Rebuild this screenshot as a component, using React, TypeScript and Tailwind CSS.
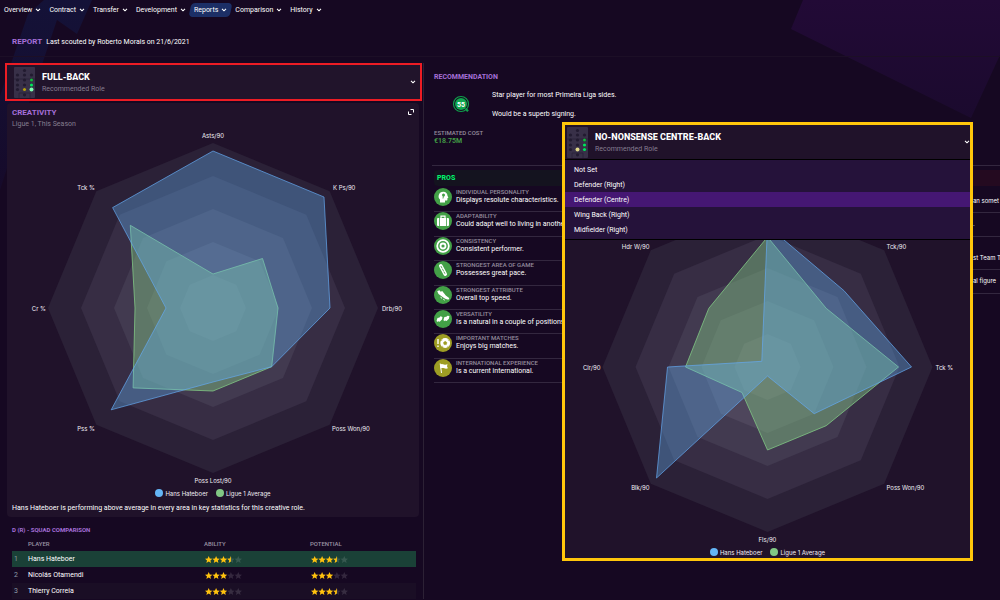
import { type ReactNode } from "react";

type Point = [number, number];
type AxisLabel = { text: string; x: number; y: number; anchor: "start" | "middle" | "end" };
type Chart = { labels: AxisLabel[]; player: number[]; average: number[] };

const NAV = ["Overview", "Contract", "Transfer", "Development", "Reports", "Comparison", "History"];

const RINGS = [
  { r: 165, fill: "#2b2137" },
  { r: 132, fill: "#372d44" },
  { r: 99, fill: "#423a50" },
  { r: 66, fill: "#4e465c" },
  { r: 33, fill: "#595167" },
];

// Values run clockwise from the top axis, in chart units (0 - 165)
const CREATIVITY: Chart = {
  labels: [
    { text: "Asts/90", x: 0, y: -172, anchor: "middle" },
    { text: "K Ps/90", x: 120, y: -120, anchor: "start" },
    { text: "Drb/90", x: 169, y: 1, anchor: "start" },
    { text: "Poss Won/90", x: 119, y: 121, anchor: "start" },
    { text: "Poss Lost/90", x: 0, y: 173, anchor: "middle" },
    { text: "Pss %", x: -118, y: 121, anchor: "end" },
    { text: "Cr %", x: -167, y: 1, anchor: "end" },
    { text: "Tck %", x: -118, y: -120, anchor: "end" },
  ],
  player: [157, 157, 117, 83, 74, 144, 47, 142],
  average: [34, 70, 65, 83, 83, 113, 78, 117],
};

const DEFENDING: Chart = {
  labels: [
    { text: "Tck/90", x: 119, y: -120, anchor: "start" },
    { text: "Tck %", x: 168, y: 1, anchor: "start" },
    { text: "Poss Won/90", x: 119, y: 121, anchor: "start" },
    { text: "Fls/90", x: 0, y: 173, anchor: "middle" },
    { text: "Blk/90", x: -118, y: 121, anchor: "end" },
    { text: "Clr/90", x: -167, y: 1, anchor: "end" },
    { text: "Hdr W/90", x: -118, y: -120, anchor: "end" },
  ],
  player: [141, 108, 144, 66, 9, 157, 100, 8],
  average: [130, 83, 131, 83, 83, 36, 82, 83],
};

const PLAYERS = [
  { rank: 1, name: "Hans Hateboer", ability: 3.5, potential: 3.5 },
  { rank: 2, name: "Nicolás Otamendi", ability: 3, potential: 3 },
  { rank: 3, name: "Thierry Correia", ability: 3, potential: 3.5 },
];

const POSITIONS = ["Not Set", "Defender (Right)", "Defender (Centre)", "Wing Back (Right)", "Midfielder (Right)"];

const PROS: { title: string; text: string; gold?: boolean; icon: ReactNode }[] = [
  {
    title: "INDIVIDUAL PERSONALITY",
    text: "Displays resolute characteristics.",
    icon: (
      <>
        <path d="M6 14.5v-3C4.6 10.200 4.300 8.500 4.800 6.900 5.500 4.800 7.300 3.600 9.400 3.700c2.500.1 4.100 1.700 4.100 4l.9 2.100-1 .4v1.500c0 .6-.4.9-1 .9H11v1.900z" fill="#fff" />
        <circle cx="9.500" cy="7" r="1.500" fill="#43a047" />
        <path d="M9.500 7.500L9 10.500" stroke="#43a047" strokeWidth=".9" />
      </>
    ),
  },
  {
    title: "ADAPTABILITY",
    text: "Could adapt well to living in another",
    icon: (
      <>
        <path d="M7 6V4.200h4V6" fill="none" stroke="#fff" strokeWidth="1.200" />
        <rect x="3" y="6" width="12" height="8" rx="1" fill="#fff" />
        <path d="M5.500 6v8M12.500 6v8" stroke="#43a047" strokeWidth=".8" />
      </>
    ),
  },
  {
    title: "CONSISTENCY",
    text: "Consistent performer.",
    icon: (
      <g fill="none" stroke="#fff">
        <circle cx="9" cy="9" r="5.800" strokeWidth="1.800" />
        <circle cx="9" cy="9" r="2.500" strokeWidth="1.800" />
      </g>
    ),
  },
  {
    title: "STRONGEST AREA OF GAME",
    text: "Possesses great pace.",
    icon: (
      <g transform="rotate(-28 9 9)">
        <rect x="7.200" y="2.500" width="3.600" height="13" rx="1.800" fill="#fff" />
        <path d="M9 4.500v9" stroke="#43a047" strokeWidth=".8" strokeDasharray="2.500 .6" />
      </g>
    ),
  },
  {
    title: "STRONGEST ATTRIBUTE",
    text: "Overall top speed.",
    icon: (
      <>
        <path d="M3.200 5.200l2.200-.9 1.300 1.400 1.500-.7 3.600 4.600 3 2.200c.7.6.5 1.600-.4 1.700-1.500.2-3.200-.3-4.400-1.400L4.500 7.900z" fill="#fff" />
        <path d="M6.500 11.200l1.600 1.200M9.300 13.300l1.400.8" stroke="#fff" strokeWidth="1" />
      </>
    ),
  },
  {
    title: "VERSATILITY",
    text: "Is a natural in a couple of positions.",
    icon: (
      <>
        <path d="M2.600 10.500l.9-2.600 2-.4 1-1.200 2 .6-.5 2.700-2.300 2.200-1.600-.5-1 .7z" fill="#fff" />
        <path d="M9.500 9.700l.9-2.600 2-.4 1-1 2 .4-.5 2.700-2.300 2.200-1.600-.5-1 .7z" fill="#fff" />
      </>
    ),
  },
  {
    title: "IMPORTANT MATCHES",
    text: "Enjoys big matches.",
    gold: true,
    icon: (
      <>
        <path d="M4 5v5M4 11.500v1.500" stroke="#fff" strokeWidth="1.400" />
        <circle cx="11.200" cy="9" r="4.900" fill="#fff" />
        <path d="M11.200 7.300l1.700 1.300-.6 2h-2.200l-.6-2zM7.300 7l1-1.400M15.100 7l-1-1.400M8 12.200l1.200.3M14.500 12.200l-1.200.3" fill="#9e9d24" stroke="#9e9d24" strokeWidth=".6" />
      </>
    ),
  },
  {
    title: "INTERNATIONAL EXPERIENCE",
    text: "Is a current international.",
    gold: true,
    icon: (
      <>
        <path d="M6.200 4.500l1.300 9.500" stroke="#fff" strokeWidth="1" />
        <path d="M6 5.500c1.500-1 2.800-.6 4-.1 1 .4 2 .4 3.500-.2l-.5 2.100.9 2c-1.500.6-2.600.4-3.600 0-1.300-.5-2.400-.6-3.700.1z" fill="#fff" />
      </>
    ),
  },
];

function axisPoint(index: number, value: number): Point {
  const angle = (index * Math.PI) / 4;
  return [Math.sin(angle) * value, -Math.cos(angle) * value];
}

function polygon(values: number[]) {
  return values.map((v, i) => axisPoint(i, v).map((n) => n.toFixed(1)).join(",")).join(" ");
}

function Chevron() {
  return (
    <svg viewBox="0 0 6 4" className="h-1 w-1.5 shrink-0" aria-hidden="true">
      <path d="M1 .8l2 2 2-2" fill="none" stroke="currentColor" strokeWidth="1.100" />
    </svg>
  );
}

function Pitch({ centre }: { centre?: boolean }) {
  const rows = [8, 13, 18, 22.5];
  return (
    <svg viewBox="0 0 21 31" className="h-[31px] w-[21px] shrink-0" aria-hidden="true">
      <rect width="21" height="31" rx="1" fill="#383048" />
      <path d="M0 12h21M5 31v-5h11v5" fill="none" stroke="#2a2238" strokeWidth=".8" />
      <circle cx="10.500" cy="3.500" r="1.600" fill="#221b30" />
      <circle cx="10.500" cy="27.800" r="1.600" fill="#221b30" />
      {rows.map((y) =>
        [3.5, 10.5, 17.5].map((x) => <circle key={`${x}-${y}`} cx={x} cy={y} r="1.600" fill="#221b30" />),
      )}
      <circle cx="17.500" cy="13" r="1.500" fill="#12b83a" />
      <circle cx="17.500" cy="18" r="1.600" fill="#00e65c" />
      <circle cx="17.500" cy="22.500" r={centre ? 1.6 : 2} fill={centre ? "#00e65c" : "#7dffb0"} />
      <circle cx="10.500" cy="22.500" r={centre ? 2 : 1.6} fill={centre ? "#e0d98a" : "#b5a010"} />
    </svg>
  );
}

function RoleHeader({ role, centre, open }: { role: string; centre?: boolean; open?: boolean }) {
  return (
    <button type="button" aria-expanded={!!open} className="flex h-[34px] w-full items-center gap-[7px] pl-0.5 text-left text-white">
      <Pitch centre={centre} />
      <span className="flex-1 pt-0.5">
        <span className="block text-[9px] leading-3 font-extrabold">{role}</span>
        <span className="block text-[7px] leading-3 text-[#857d90]">Recommended Role</span>
      </span>
      <Chevron />
    </button>
  );
}

function Radar({ chart, name }: { chart: Chart; name: string }) {
  return (
    <svg viewBox="-202 -180 404 360" role="img" aria-label={name} className="block h-[360px] w-full font-[Inter,sans-serif]">
      {RINGS.map((ring) => (
        <polygon key={ring.r} points={polygon(Array(8).fill(ring.r))} fill={ring.fill} />
      ))}
      <polygon points={polygon(chart.average)} fill="#81c784" fillOpacity=".44" stroke="#81c784" strokeOpacity=".8" />
      <polygon points={polygon(chart.player)} fill="#64b5f6" fillOpacity=".35" stroke="#64a8f0" strokeOpacity=".7" />
      {chart.labels.map((label) => (
        <text key={label.text} x={label.x} y={label.y} textAnchor={label.anchor} dominantBaseline="middle" fontSize="6" fill="#f2eff5">
          {label.text}
        </text>
      ))}
    </svg>
  );
}

function Legend() {
  return (
    <ul className="flex h-[10px] items-center justify-center gap-2 font-[Inter,sans-serif] text-[6px] text-[#f2eff5]">
      <li className="flex items-center gap-0.5">
        <span className="size-2 rounded-full bg-[#64b5f6]" />
        Hans Hateboer
      </li>
      <li className="flex items-center gap-0.5">
        <span className="size-2 rounded-full bg-[#81c784]" />
        Ligue 1 Average
      </li>
    </ul>
  );
}

function Stars({ value }: { value: number }) {
  const star = "M3.700.1l1.100 2.400 2.600.2-2 1.700.6 2.600-2.300-1.400-2.300 1.400.6-2.600L0 2.700l2.600-.2z";
  const half = "M3.700.1v5.500l-2.300 1.400.6-2.600L0 2.700l2.600-.2z";
  return (
    <svg viewBox="0 0 37 7" role="img" aria-label={`${value} stars`} className="ml-px block h-[7px] w-[37px]">
      {[0, 1, 2, 3, 4].map((i) => (
        <g key={i} transform={`translate(${i * 7.4} 0)`}>
          <path d={star} fill={value >= i + 1 ? "#ffc20e" : "#fff"} fillOpacity={value >= i + 1 ? 1 : 0.13} />
          {value === i + 0.5 && <path d={half} fill="#ffc20e" />}
        </g>
      ))}
    </svg>
  );
}

function SquadTable() {
  return (
    <section className="mt-2 px-[7px]">
      <h2 className="text-[6px] leading-[10px] font-bold text-[#a56fd8]">D (R) - SQUAD COMPARISON</h2>
      <table className="w-full table-fixed text-left text-[7px] text-white">
        <colgroup>
          <col className="w-4" />
          <col className="w-44" />
          <col className="w-[106px]" />
          <col />
        </colgroup>
        <thead>
          <tr className="h-4 text-[6px] text-[#9a92a3]">
            <th aria-label="Rank" />
            <th className="font-medium">PLAYER</th>
            <th className="font-medium">ABILITY</th>
            <th className="font-medium">POTENTIAL</th>
          </tr>
        </thead>
        <tbody>
          {PLAYERS.map((p) => (
            <tr key={p.rank} className="h-4 first:bg-[#1a4137] odd:not-first:bg-[#1a0e25]">
              <td className="pl-0.5 text-[#8f9aa8]">{p.rank}</td>
              <td>{p.name}</td>
              <td><Stars value={p.ability} /></td>
              <td><Stars value={p.potential} /></td>
            </tr>
          ))}
        </tbody>
      </table>
    </section>
  );
}

function Backdrop() {
  return (
    <svg viewBox="0 0 1000 600" preserveAspectRatio="none" className="absolute inset-0 size-full" aria-hidden="true">
      <defs>
        <linearGradient id="violet" x1="0" y1="0" x2="0" y2="1">
          <stop offset="0" stopColor="#220a36" />
          <stop offset="1" stopColor="#1b0a2e" />
        </linearGradient>
        <linearGradient id="blue" x1="0" y1="0" x2="0" y2="1">
          <stop offset="0" stopColor="#141238" />
          <stop offset="1" stopColor="#160a2a" />
        </linearGradient>
      </defs>
      <path d="M803 0L791 29L971 118L1000 55V0z" fill="url(#violet)" />
      <path d="M28 14L44 0H92L77 34L57 20L8 165L0 190V96z" fill="url(#blue)" />
    </svg>
  );
}

function RolePopup() {
  return (
    <div className="absolute top-[122px] right-[27px] w-[411px] border-3 border-[#ffc60b] bg-[#20122a] pb-px">
      <RoleHeader role="NO-NONSENSE CENTRE-BACK" centre open />
      <div className="relative pt-7">
        <ul className="absolute inset-x-0 top-0 border-y border-black bg-[#25123a] py-0.5">
          {POSITIONS.map((position) => (
            <li key={position}>
              <button
                type="button"
                aria-current={position === "Defender (Centre)"}
                className="block h-[15px] w-full pt-px pl-[9px] text-left text-[7px] leading-[15px] text-white aria-[current=true]:bg-[#451773]"
              >
                {position}
              </button>
            </li>
          ))}
        </ul>
        <Radar chart={DEFENDING} name="Defending statistics" />
        <Legend />
      </div>
    </div>
  );
}

function Pros() {
  return (
    <section className="pl-0.5 whitespace-nowrap">
      <h2 className="h-4 rounded-sm bg-[#14131f] pl-[3px] text-[7px] leading-[17px] font-extrabold text-[#00f26a]">PROS</h2>
      <ul className="mt-0.5 grid h-[195px] grid-rows-8">
        {PROS.map((pro) => (
          <li key={pro.title} className="flex items-start gap-1 border-b border-[#33273f]">
            <svg viewBox="0 0 18 18" className="size-[18px] shrink-0" aria-hidden="true">
              <circle cx="9" cy="9" r="9" fill={pro.gold ? "#9e9d24" : "#43a047"} />
              {pro.icon}
            </svg>
            <div>
              <h3 className="text-[6px] leading-2 font-medium text-[#958d9e]">{pro.title}</h3>
              <p className="text-[7px] leading-[9px] text-white">{pro.text}</p>
            </div>
          </li>
        ))}
      </ul>
    </section>
  );
}

function Cons() {
  return (
    <section aria-label="Cons" className="font-[Inter,sans-serif] text-[6px] whitespace-nowrap text-white">
      <div className="h-4 bg-[#240a20]" />
      <ul className="*:border-b *:border-[#33273f]">
        <li className="h-[27px] pt-2.5">an somet</li>
        <li className="h-6 pt-1.5">.</li>
        <li className="h-[33px] pt-4">st Team T</li>
        <li className="h-6 pt-1.5">al figure</li>
      </ul>
    </section>
  );
}

export default function App() {
  return (
    <div className="relative h-screen overflow-hidden bg-[#160822] font-[Roboto,sans-serif] text-white">
      <Backdrop />
      <div className="relative">
        <nav className="flex h-5 items-center gap-2 pl-1 text-[7px]">
          {NAV.map((item) => (
            <button
              key={item}
              type="button"
              aria-current={item === "Reports" ? "page" : undefined}
              className="relative flex h-3.5 items-center gap-[3px] before:absolute before:inset-y-0 before:-inset-x-1 before:-skew-x-12 before:rounded-sm aria-[current=page]:before:bg-[#1c2f66]"
            >
              <span className="relative">{item}</span>
              <span className="relative"><Chevron /></span>
            </button>
          ))}
        </nav>

        <header className="flex h-[37px] items-center gap-1 border-b border-[#1c0f26] pt-2 pl-3">
          <h1 className="text-[8px] font-bold text-[#a56fd8]">REPORT</h1>
          <p className="text-[7px]">Last scouted by Roberto Morais on 21/6/2021</p>
        </header>

        <main className="flex pt-[6px]">
          <div className="w-[42.4%] shrink-0 border-r border-[#2c2135] pl-[5px]">
            <div className="mr-px border-2 border-[#ed1c24] bg-[#21142b] pr-1 pl-[5px]">
              <RoleHeader role="FULL-BACK" />
            </div>
            <section className="mt-0.5 mr-1 ml-0.5 rounded-sm bg-[#20122a]">
              <div className="flex h-[25px] items-start justify-between px-[5px] pt-1">
                <div>
                  <h2 className="text-[8px] leading-[11px] font-bold text-[#a56fd8]">CREATIVITY</h2>
                  <p className="text-[7px] leading-3 text-[#857d90]">Ligue 1, This Season</p>
                </div>
                <button type="button" aria-label="Expand">
                  <svg viewBox="0 0 6 6" className="mt-0.5 size-1.5" aria-hidden="true">
                    <path d="M2.500.5h3v3M.5 2.500v3h3" fill="none" stroke="#fff" strokeWidth="1" />
                  </svg>
                </button>
              </div>
              <Radar chart={CREATIVITY} name="Creativity statistics" />
              <Legend />
              <p className="px-[5px] pt-1 pb-[3px] text-[7px] leading-3">
                Hans Hateboer is performing above average in every area in key statistics for this creative role.
              </p>
            </section>
            <SquadTable />
          </div>

          <div className="min-w-0 flex-1 pl-2">
            <section className="pt-[9px] pl-0.5">
              <h2 className="text-[7px] leading-[10px] font-bold text-[#a56fd8]">RECOMMENDATION</h2>
              <div className="flex h-11 items-center gap-[22px] pl-[18px]">
                <svg viewBox="0 0 18 18" role="img" aria-label="Score 55" className="size-[18px]">
                  <circle cx="9" cy="9" r="7.500" fill="none" stroke="#0fa04b" strokeWidth="1.200" />
                  <path d="M13.500 13.500l2.500 2.800" stroke="#0fa04b" strokeWidth="2.200" />
                  <circle cx="9" cy="9" r="6" fill="#10a84f" />
                  <text x="9" y="11.500" textAnchor="middle" fontSize="7" fontWeight="700" fill="#fff">55</text>
                </svg>
                <div className="text-[7px] leading-[10px]">
                  <p>Star player for most Primeira Liga sides.</p>
                  <p className="mt-[9px]">Would be a superb signing.</p>
                </div>
              </div>
              <h3 className="mt-[3px] text-[6px] leading-2 font-medium text-[#958d9e]">ESTIMATED COST</h3>
              <p className="text-[7px] leading-2 font-semibold text-[#43a047]">€18.75M</p>
            </section>
            <div className="mt-5 grid grid-cols-[1fr_27px] border-t border-[#33273f] pt-1">
              <Pros />
              <Cons />
            </div>
          </div>
        </main>
      </div>
      <RolePopup />
    </div>
  );
}
